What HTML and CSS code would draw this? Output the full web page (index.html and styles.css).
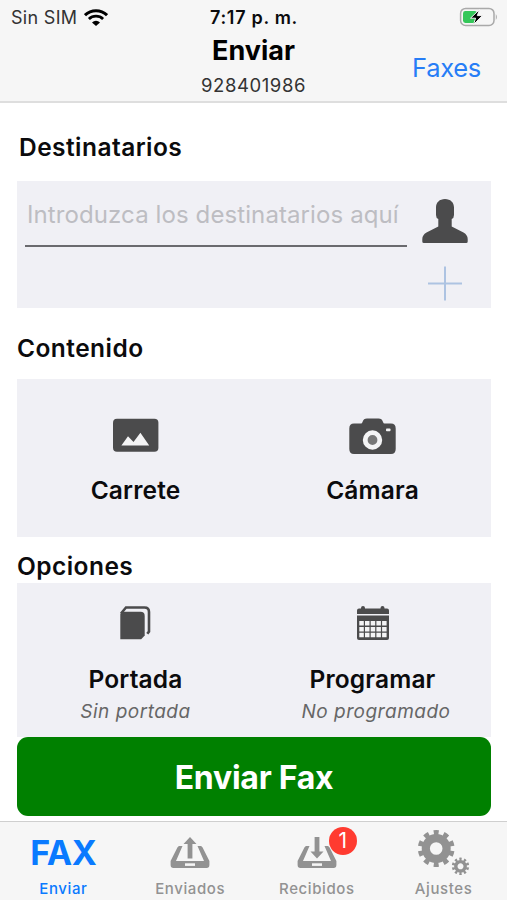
FILE: index.html
```
<!DOCTYPE html>
<html lang="es">
<head>
  <meta charset="UTF-8" />
  <meta name="viewport" content="width=device-width, initial-scale=1.0" />
  <title>Enviar Fax</title>
  <link rel="stylesheet" href="styles.css">
</head>
<body>
  <header class="header">
    <div class="status">
      <div class="carrier">
        <span class="carrier-name">Sin SIM</span>
        <svg width="24" height="18" viewBox="0 0 24 18">
          <path d="M1 6.2 A16 16 0 0 1 23 6.2" fill="none" stroke="#000" stroke-width="3" />
          <path d="M4.9 10 A10.3 10.3 0 0 1 19.1 10" fill="none" stroke="#000" stroke-width="2.8" />
          <path d="M12 17 L8 13.4 A6 6 0 0 1 16 13.4 Z" fill="#000" />
        </svg>
      </div>
      <span class="time">7:17 p. m.</span>
      <svg class="battery" width="40" height="20" viewBox="0 0 40 20">
        <rect x="1.6" y="1.4" width="33.4" height="17" rx="5" fill="none" stroke="#a9a9a9" stroke-width="1.5" />
        <rect x="4" y="4" width="14" height="12" rx="2.4" fill="#34c759" />
        <path d="M36.8 7 q2.2 3 0 6 z" fill="#a9a9a9" />
        <path d="M20.5 2.5 L11.5 11.2 H16.6 L14.5 17.5 L23.5 8.6 H18.3 Z" fill="#000" stroke="#f6f6f6" stroke-width="1" />
      </svg>
    </div>
    <div class="nav">
      <div class="nav-title">
        <h1>Enviar</h1>
        <p>928401986</p>
      </div>
      <a class="nav-link">Faxes</a>
    </div>
  </header>

  <main class="content">
    <h2 class="first">Destinatarios</h2>
    <section class="card recipients">
      <div class="field">Introduzca los destinatarios aquí</div>
      <div class="recipient-buttons">
        <svg width="46" height="46" viewBox="0 0 46 46">
          <path d="M23 1 C17.5 1 14 4.500 14 9.500 V17 Q14 20 16.300 21 V28.500 L4.500 34.500 Q0.300 37 0.300 41 V43.500 Q0.300 45 1.800 45 H44.200 Q45.700 45 45.700 43.500 V41 Q45.700 37 41.500 34.500 L29.700 28.500 V21 Q32 20 32 17 V9.500 C32 4.500 28.500 1 23 1 Z" fill="#4b4b4c" />
        </svg>
        <svg width="34" height="35" viewBox="0 0 34 35">
          <path d="M17 0.500 V34.500 M0 17.500 H34" stroke="#adc3e2" stroke-width="2" />
        </svg>
      </div>
    </section>

    <h2>Contenido</h2>
    <section class="card sources">
      <div class="option">
        <svg width="46" height="36" viewBox="0 0 46 36">
          <rect x="0" y="0.700" width="45.400" height="33" rx="4" fill="#4b4b4c" />
          <path d="M8.400 27.400 L15 18.200 L20.500 24 L27.400 14.700 L36.200 27.400 Z" fill="#f4f4f5" />
        </svg>
        <span class="label">Carrete</span>
      </div>
      <div class="option">
        <svg width="47" height="36" viewBox="0 0 47 36">
          <path d="M5 5.600 H12 Q13 5.600 13.500 4 Q14.500 0.600 18 0.600 H29.500 Q33 0.600 34 4 Q34.500 5.600 35.500 5.600 H42 Q46.700 5.600 46.700 10.500 V31 Q46.700 36 42 36 H5 Q0.300 36 0.300 31 V10.500 Q0.300 5.600 5 5.600 Z" fill="#4b4b4c" />
          <circle cx="23.500" cy="22" r="7.300" fill="#777" stroke="#f4f4f5" stroke-width="4.800" />
          <rect x="37" y="10.500" width="4.500" height="2.800" rx="0.800" fill="#f4f4f5" />
        </svg>
        <span class="label">Cámara</span>
      </div>
    </section>

    <h2 class="tight">Opciones</h2>
    <section class="card options">
      <div class="option">
        <svg width="32" height="36" viewBox="0 0 32 36">
          <path d="M1 8.500 L6 2.500 H24.500 Q29 2.500 29 7 V26.500 L27.300 28.800" fill="none" stroke="#4b4b4c" stroke-width="2.600" />
          <path d="M0.300 9 Q1 6.800 3.500 6.800 H20.500 Q24.700 6.800 24.700 11 V30.500 L21.200 34.300 H0.300 Z" fill="#4b4b4c" />
        </svg>
        <span class="label">Portada</span>
        <span class="hint">Sin portada</span>
      </div>
      <div class="option">
        <svg width="34" height="36" viewBox="0 0 34 36">
          <path d="M5 3 Q5 1 7 1 T9 3 V3.500 H24.500 V3 Q24.500 1 26.500 1 T28.500 3 V3.500 H31 Q33 3.500 33 5.500 V9 H1 V5.500 Q1 3.500 3 3.500 H5 Z" fill="#4b4b4c" />
          <path d="M1 10.500 H33 V33 Q33 35 31 35 H3 Q1 35 1 33 Z" fill="#4b4b4c" />
          <path d="M3.300 18.300 H30.700 M3.300 24.200 H30.700 M3.300 30 H30.700" stroke="#f4f4f5" stroke-width="4.400" stroke-dasharray="4.500 1.200" />
        </svg>
        <span class="label">Programar</span>
        <span class="hint schedule-hint">No programado</span>
      </div>
    </section>
    <button class="send">Enviar Fax</button>
  </main>

  <nav class="tabs">
    <a class="tab active">
      <span class="tab-icon fax">FAX</span>
      <span class="tab-label">Enviar</span>
    </a>
    <a class="tab">
      <span class="tab-icon">
        <svg width="40" height="34" viewBox="0 0 40 34">
          <path d="M12.500 10 H9.300 Q8 10 7.400 11.500 L0.600 25 V29 Q0.600 32 3.500 32 H36.500 Q39.400 32 39.400 29 V25 L32.600 11.500 Q32 10 30.700 10 H27.500 L34 25 H6 Z" fill="#929292" />
          <path d="M20 1 L26.500 8 H22.400 V22.500 H17.600 V8 H13.500 Z" fill="#929292" />
          <rect x="15" y="27.300" width="10" height="2.600" fill="#f6f6f6" />
        </svg>
      </span>
      <span class="tab-label">Enviados</span>
    </a>
    <a class="tab">
      <span class="tab-icon">
        <svg width="40" height="34" viewBox="0 0 40 34">
          <path d="M12.500 10 H9.300 Q8 10 7.400 11.500 L0.600 25 V29 Q0.600 32 3.500 32 H36.500 Q39.400 32 39.400 29 V25 L32.600 11.500 Q32 10 30.700 10 H27.500 L34 25 H6 Z" fill="#929292" />
          <path d="M17.600 1 H22.400 V15.500 H26.500 L20 22.500 L13.500 15.500 H17.600 Z" fill="#929292" />
          <rect x="15" y="27.300" width="10" height="2.600" fill="#f6f6f6" />
        </svg>
        <span class="badge">1</span>
      </span>
      <span class="tab-label">Recibidos</span>
    </a>
    <a class="tab">
      <span class="tab-icon">
        <svg width="52" height="46" viewBox="0 0 52 46">
          <g fill="none" stroke="#929292">
            <g transform="translate(18.200 18.500) rotate(-90)">
              <circle r="10.400" stroke-width="8.200" />
              <circle r="16" stroke-width="4.800" pathLength="100" stroke-dasharray="5 5" stroke-dashoffset="2.500" />
            </g>
            <g transform="translate(42.500 36.300) rotate(-90)">
              <circle r="4.700" stroke-width="3.400" />
              <circle r="7.200" stroke-width="3" pathLength="100" stroke-dasharray="5 5" stroke-dashoffset="2.500" />
            </g>
          </g>
        </svg>
      </span>
      <span class="tab-label">Ajustes</span>
    </a>
  </nav>
</body>
</html>
```
FILE: styles.css
```
body {
  font-family: Inter, "Liberation Sans", sans-serif;
  background-color: #fff;
  color: #0b0b0d;
  margin: 0;
  height: 900px;
  display: flex;
  flex-direction: column;
  overflow: hidden;
}

h1, h2, p {
  margin: 0;
}

svg {
  display: block;
  flex: none;
}

.header {
  background: #f6f6f6;
  border-bottom: 2px solid #dedede;
  height: 101px;
}

.status {
  display: grid;
  grid-template-columns: 1fr auto 1fr;
  align-items: center;
  height: 35px;
  padding: 0 8px 0 11px;
}

.carrier {
  display: flex;
  align-items: center;
  gap: 7px;
}

.carrier-name {
  font-size: 18px;
  letter-spacing: 0.3px;
  color: #333;
}

.time {
  font-size: 18px;
  font-weight: 600;
  letter-spacing: 0.7px;
  margin-right: 2px;
}

.battery {
  justify-self: end;
  margin-bottom: 2px;
}

.nav {
  display: grid;
  grid-template-columns: 1fr auto 1fr;
  align-items: center;
  padding: 0 26px;
}

.nav-title {
  grid-column: 2;
  text-align: center;
}

.nav-title h1 {
  font-size: 27px;
  font-weight: 700;
  line-height: 32px;
  color: #000;
}

.nav-title p {
  font-size: 18.5px;
  letter-spacing: 0.6px;
  line-height: 36px;
  color: #333;
}

.nav-link {
  justify-self: end;
  font-size: 25.5px;
  letter-spacing: -0.3px;
  padding-bottom: 4px;
  color: #267df6;
}

.content {
  padding: 0 16px 0 17px;
  flex: 1;
}

h2 {
  font-size: 24.5px;
  font-weight: 600;
  letter-spacing: 0.45px;
  line-height: 62px;
  padding-top: 9px;
}

h2.first {
  line-height: 68px;
  padding: 10px 0 0 2px;
}

h2.tight {
  line-height: 33px;
  padding-top: 13px;
}

.card {
  background: #f0f0f5;
  box-sizing: border-box;
  display: flex;
}

.recipients {
  height: 127px;
  padding: 0 23px 0 8px;
  justify-content: space-between;
  align-items: flex-start;
}

.field {
  width: 380px;
  line-height: 61px;
  padding: 3px 0 0 2px;
  font-size: 24px;
  letter-spacing: 0.1px;
  color: #bdbdc2;
  border-bottom: 2px solid #6a6a6e;
  white-space: nowrap;
}

.recipient-buttons {
  display: flex;
  flex-direction: column;
  align-items: center;
  gap: 22px;
  padding-top: 17px;
}

.sources {
  height: 158px;
  padding-top: 39px;
}

.options {
  height: 154px;
  padding-top: 22px;
}

.option {
  flex: 1;
  display: flex;
  flex-direction: column;
  align-items: center;
}

.label {
  font-size: 24.5px;
  font-weight: 600;
  letter-spacing: 0.15px;
  line-height: 32px;
  margin-top: 22px;
}

.sources .label {
  margin-top: 20px;
}

.hint {
  font-size: 19px;
  font-style: italic;
  letter-spacing: 0.5px;
  line-height: 32px;
  padding-top: 1px;
  color: #666;
}

.schedule-hint {
  padding-left: 7px;
}

.send {
  display: block;
  width: 100%;
  height: 79px;
  border: none;
  border-radius: 11px;
  background: #008000;
  color: #fff;
  font-family: inherit;
  font-size: 32px;
  font-weight: 700;
  letter-spacing: -0.25px;
  padding: 2px 0 0;
}

.tabs {
  display: flex;
  height: 78px;
  background: #f6f6f6;
  border-top: 1px solid #cfcfcf;
}

.tab {
  flex: 1;
  display: flex;
  flex-direction: column;
  align-items: center;
  color: #929292;
}

.tab.active {
  color: #0a7aff;
}

.tab-icon {
  position: relative;
  box-sizing: border-box;
  height: 58px;
  padding-top: 3px;
  display: flex;
  align-items: center;
}

.fax {
  font-size: 34px;
  font-weight: 700;
  letter-spacing: -0.4px;
}

.tab-label {
  font-size: 15px;
  font-weight: 500;
  letter-spacing: 0.6px;
  line-height: 18px;
}

.badge {
  position: absolute;
  left: 32px;
  top: 5px;
  width: 28px;
  height: 28px;
  border-radius: 50%;
  background: #ff3b30;
  color: #fff;
  font-size: 21px;
  line-height: 28px;
  text-align: center;
}
```
